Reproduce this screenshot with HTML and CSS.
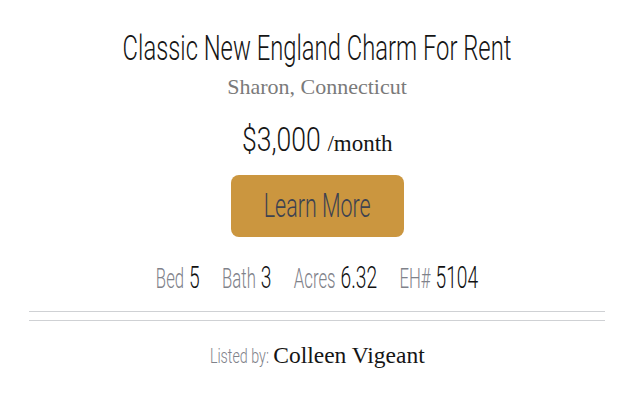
FILE: index.html
```html
<!DOCTYPE html>
<html>
  <head>
    <title>Classic New England Charm For Rent</title>
    <link rel="stylesheet" href="styles.css">
  </head>
  <body>
    <div class="listing">
      <h1 class="title">Classic New England Charm For Rent</h1>
      <p class="location">Sharon, Connecticut</p>
      <p class="price">
        <span class="fit amount-box"><span class="amount">$3,000</span></span>
        <span class="per">/month</span>
      </p>
      <a class="btn" href="#"><span class="btn-text">Learn More</span></a>
      <ul class="stats">
        <li><span class="label">Bed</span><span class="val">5</span></li>
        <li><span class="label">Bath</span><span class="val">3</span></li>
        <li><span class="label">Acres</span><span class="val">6.32</span></li>
        <li><span class="label">EH#</span><span class="val">5104</span></li>
      </ul>
      <div class="rule"></div>
      <p class="agent">
        <span class="fit agent-box"><span class="agent-label">Listed by:</span></span>
        <span class="name">Colleen Vigeant</span>
      </p>
    </div>
  </body>
</html>
```

FILE: styles.css
```css
body {
  margin: 0;
  background: #fff;
  font-family: Roboto, sans-serif;
  font-weight: 300;
}
.listing {
  padding: 28px 29px 0;
  text-align: center;
}

/* narrow headline face: Roboto squeezed sideways */
.title {
  margin: 0 -29px;
  font-size: 35px;
  font-weight: 300;
  line-height: 42px;
  color: #151515;
  white-space: nowrap;
  transform: scaleX(0.68);
}
.fit {
  display: inline-flex;
  justify-content: center;
  white-space: nowrap;
}
.fit > span {
  flex: none;
}

.location {
  margin: 4px 0 0;
  font-family: "Liberation Serif", serif;
  font-size: 22px;
  line-height: 26px;
  color: #7a7a7a;
}
.price {
  margin: 19px 0 0;
  display: flex;
  justify-content: center;
  align-items: baseline;
  font-size: 34px;
  line-height: 40px;
  color: #151515;
}
.amount-box {
  width: 80px;
}
.amount {
  transform: scaleX(0.78);
}
.per {
  margin-left: 6px;
  font-family: "Liberation Serif", serif;
  font-size: 23px;
}
.btn {
  display: flex;
  justify-content: center;
  margin: 11px auto 0;
  width: 173px;
  height: 62px;
  line-height: 62px;
  background: #cb963f;
  border-radius: 8px;
  color: #3d4251;
  font-size: 33px;
  text-decoration: none;
  white-space: nowrap;
}
.btn-text {
  flex: none;
  transform: scaleX(0.65);
}
.stats {
  list-style: none;
  margin: 25px 0 0;
  padding: 0;
  display: flex;
  justify-content: center;
  align-items: baseline;
  gap: 36px;
  font-size: 27px;
  line-height: 32px;
  white-space: nowrap;
  transform: scaleX(0.62);
}
.label {
  color: #7f828a;
}
.val {
  margin-left: 8px;
  font-size: 31px;
  color: #111;
}
.rule {
  margin-top: 16px;
  height: 8px;
  border-top: 1px solid #cfd1d4;
  border-bottom: 1px solid #cfd1d4;
}
.agent {
  margin: 19px 0 0;
  display: flex;
  justify-content: center;
  align-items: baseline;
  gap: 4px;
  font-size: 21px;
  line-height: 30px;
}
.agent-box {
  width: 60px;
}
.agent-label {
  color: #7f828a;
  transform: scaleX(0.68);
}
.name {
  font-family: "Liberation Serif", serif;
  font-size: 23.5px;
  color: #151515;
}
```
